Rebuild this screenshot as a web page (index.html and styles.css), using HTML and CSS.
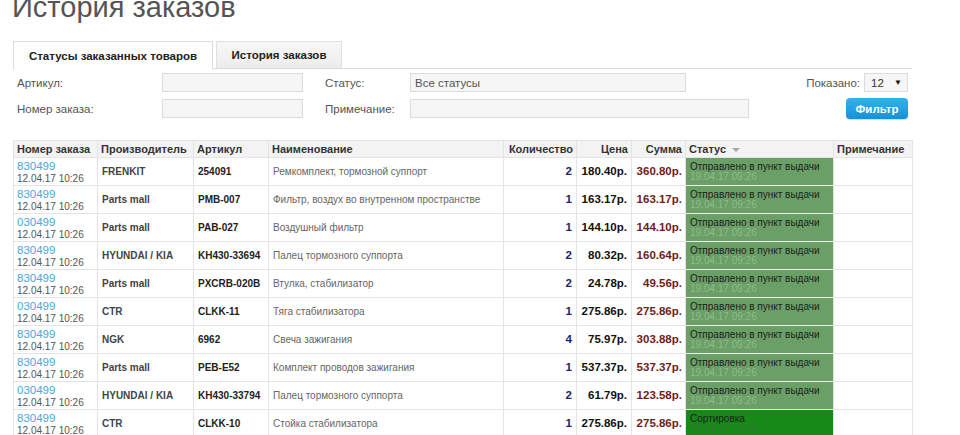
FILE: index.html
```html
<!DOCTYPE html>
<html lang="ru">
<head>
<meta charset="utf-8">
<title>История заказов</title>
<link rel="stylesheet" href="styles.css">
</head>
<body>
<div class="page">
  <h1 class="title">История заказов</h1>

  <div class="tabs">
    <div class="tab active">Статусы заказанных товаров</div>
    <div class="tab">История заказов</div>
  </div>

  <div class="filters">
    <div class="frow">
      <span class="lbl lbl1">Артикул:</span>
      <span class="inp w1"></span>
      <span class="lbl lbl2">Статус:</span>
      <span class="inp w2 sel">Все статусы</span>
      <span class="spacer"></span>
      <span class="lbl lbl3">Показано:</span>
      <span class="inp per"><span>12</span><span class="arr">▼</span></span>
    </div>
    <div class="frow">
      <span class="lbl lbl1">Номер заказа:</span>
      <span class="inp w1"></span>
      <span class="lbl lbl2">Примечание:</span>
      <span class="inp w3"></span>
      <span class="spacer"></span>
      <span class="btn">Фильтр</span>
    </div>
  </div>

  <table class="orders">
    <colgroup>
      <col class="c1"><col class="c2"><col class="c3"><col class="c4"><col class="c5"><col class="c6"><col class="c7"><col class="c8"><col class="c9">
    </colgroup>
    <thead>
      <tr>
        <th>Номер заказа</th>
        <th>Производитель</th>
        <th>Артикул</th>
        <th>Наименование</th>
        <th class="r">Количество</th>
        <th class="r">Цена</th>
        <th class="r">Сумма</th>
        <th>Статус <span class="sort"></span></th>
        <th>Примечание</th>
      </tr>
    </thead>
    <tbody>
      <tr>
        <td class="ord"><div class="cellbox"><a class="num">830499</a><span class="date">12.04.17 10:26</span></div></td>
        <td class="mfr">FRENKIT</td>
        <td class="art">254091</td>
        <td class="name">Ремкомплект, тормозной суппорт</td>
        <td class="qty">2</td>
        <td class="price">180.40р.</td>
        <td class="sum">360.80р.</td>
        <td class="st sent"><div class="cellbox"><span class="st-t">Отправлено в пункт выдачи</span><span class="st-d">19.04.17 09:26</span></div></td>
        <td></td>
      </tr>
      <tr>
        <td class="ord"><div class="cellbox"><a class="num">830499</a><span class="date">12.04.17 10:26</span></div></td>
        <td class="mfr">Parts mall</td>
        <td class="art">PMB-007</td>
        <td class="name">Фильтр, воздух во внутренном пространстве</td>
        <td class="qty">1</td>
        <td class="price">163.17р.</td>
        <td class="sum">163.17р.</td>
        <td class="st sent"><div class="cellbox"><span class="st-t">Отправлено в пункт выдачи</span><span class="st-d">19.04.17 09:26</span></div></td>
        <td></td>
      </tr>
      <tr>
        <td class="ord"><div class="cellbox"><a class="num">030499</a><span class="date">12.04.17 10:26</span></div></td>
        <td class="mfr">Parts mall</td>
        <td class="art">PAB-027</td>
        <td class="name">Воздушный фильтр</td>
        <td class="qty">1</td>
        <td class="price">144.10р.</td>
        <td class="sum">144.10р.</td>
        <td class="st sent"><div class="cellbox"><span class="st-t">Отправлено в пункт выдачи</span><span class="st-d">19.04.17 09:26</span></div></td>
        <td></td>
      </tr>
      <tr>
        <td class="ord"><div class="cellbox"><a class="num">830499</a><span class="date">12.04.17 10:26</span></div></td>
        <td class="mfr">HYUNDAI / KIA</td>
        <td class="art">KH430-33694</td>
        <td class="name">Палец тормозного суппорта</td>
        <td class="qty">2</td>
        <td class="price">80.32р.</td>
        <td class="sum">160.64р.</td>
        <td class="st sent"><div class="cellbox"><span class="st-t">Отправлено в пункт выдачи</span><span class="st-d">19.04.17 09:26</span></div></td>
        <td></td>
      </tr>
      <tr>
        <td class="ord"><div class="cellbox"><a class="num">830499</a><span class="date">12.04.17 10:26</span></div></td>
        <td class="mfr">Parts mall</td>
        <td class="art">PXCRB-020B</td>
        <td class="name">Втулка, стабилизатор</td>
        <td class="qty">2</td>
        <td class="price">24.78р.</td>
        <td class="sum">49.56р.</td>
        <td class="st sent"><div class="cellbox"><span class="st-t">Отправлено в пункт выдачи</span><span class="st-d">19.04.17 09:26</span></div></td>
        <td></td>
      </tr>
      <tr>
        <td class="ord"><div class="cellbox"><a class="num">030499</a><span class="date">12.04.17 10:26</span></div></td>
        <td class="mfr">CTR</td>
        <td class="art">CLKK-11</td>
        <td class="name">Тяга стабилизатора</td>
        <td class="qty">1</td>
        <td class="price">275.86р.</td>
        <td class="sum">275.86р.</td>
        <td class="st sent"><div class="cellbox"><span class="st-t">Отправлено в пункт выдачи</span><span class="st-d">19.04.17 09:26</span></div></td>
        <td></td>
      </tr>
      <tr>
        <td class="ord"><div class="cellbox"><a class="num">830499</a><span class="date">12.04.17 10:26</span></div></td>
        <td class="mfr">NGK</td>
        <td class="art">6962</td>
        <td class="name">Свеча зажигания</td>
        <td class="qty">4</td>
        <td class="price">75.97р.</td>
        <td class="sum">303.88р.</td>
        <td class="st sent"><div class="cellbox"><span class="st-t">Отправлено в пункт выдачи</span><span class="st-d">19.04.17 09:26</span></div></td>
        <td></td>
      </tr>
      <tr>
        <td class="ord"><div class="cellbox"><a class="num">830499</a><span class="date">12.04.17 10:26</span></div></td>
        <td class="mfr">Parts mall</td>
        <td class="art">PEB-E52</td>
        <td class="name">Комплект проводов зажигания</td>
        <td class="qty">1</td>
        <td class="price">537.37р.</td>
        <td class="sum">537.37р.</td>
        <td class="st sent"><div class="cellbox"><span class="st-t">Отправлено в пункт выдачи</span><span class="st-d">19.04.17 09:26</span></div></td>
        <td></td>
      </tr>
      <tr>
        <td class="ord"><div class="cellbox"><a class="num">030499</a><span class="date">12.04.17 10:26</span></div></td>
        <td class="mfr">HYUNDAI / KIA</td>
        <td class="art">KH430-33794</td>
        <td class="name">Палец тормозного суппорта</td>
        <td class="qty">2</td>
        <td class="price">61.79р.</td>
        <td class="sum">123.58р.</td>
        <td class="st sent"><div class="cellbox"><span class="st-t">Отправлено в пункт выдачи</span><span class="st-d">19.04.17 09:26</span></div></td>
        <td></td>
      </tr>
      <tr>
        <td class="ord"><div class="cellbox"><a class="num">830499</a><span class="date">12.04.17 10:26</span></div></td>
        <td class="mfr">CTR</td>
        <td class="art">CLKK-10</td>
        <td class="name">Стойка стабилизатора</td>
        <td class="qty">1</td>
        <td class="price">275.86р.</td>
        <td class="sum">275.86р.</td>
        <td class="st sort-st"><div class="cellbox"><span class="st-t">Сортировка</span><span class="st-d">15.04.17 13:42</span></div></td>
        <td></td>
      </tr>
    </tbody>
  </table>
</div>
</body>
</html>
```
FILE: styles.css
```css
html, body {
  margin: 0;
  padding: 0;
  background: #fff;
  overflow: hidden;
}
body {
  font-family: "Liberation Sans", Arial, sans-serif;
  color: #333;
}
.page {
  padding-left: 13px;
  width: 899px;
}
.title {
  margin: -10px 0 0 -1px;
  font-size: 29px;
  line-height: 34px;
  font-weight: normal;
  color: #555;
}

/* tabs */
.tabs {
  margin-top: 17px;
  display: flex;
  height: 27px;
  border-bottom: 1px solid #dcdcdc;
}
.tab {
  box-sizing: border-box;
  height: 27px;
  display: flex;
  align-items: center;
  justify-content: center;
  font-size: 11.5px;
  font-weight: bold;
  color: #222;
  border: 1px solid #e0e0e0;
  border-bottom: none;
}
.tab.active {
  width: 200px;
  height: 28px;
  margin-bottom: -1px;
  background: #fff;
  border-color: #dcdcdc;
}
.tab:not(.active) {
  width: 126px;
  margin-left: 3px;
  background: linear-gradient(#f8f8f8, #ececec);
}

/* filters */
.filters {
  padding: 4px 4px 0 4px;
  display: flex;
  flex-direction: column;
  gap: 7px;
}
.frow {
  display: flex;
  align-items: center;
  height: 19px;
}
.lbl {
  font-size: 11.5px;
  color: #555;
}
.lbl1 { width: 145px; }
.lbl2 { width: 85px; margin-left: 22px; }
.lbl3 { margin-right: 4px; }
.inp {
  box-sizing: border-box;
  height: 19px;
  background: #f6f6f6;
  border: 1px solid #dcdcdc;
  display: flex;
  align-items: center;
  font-size: 11.5px;
  color: #555;
}
.w1 { width: 141px; }
.w2 { width: 276px; }
.w3 { width: 339px; }
.sel { padding-left: 4px; }
.spacer { flex: 1; }
.per {
  width: 44px;
  padding: 0 5px 0 6px;
  justify-content: space-between;
  color: #333;
}
.arr {
  font-size: 8px;
  color: #111;
}
.btn {
  box-sizing: border-box;
  width: 62px;
  height: 21px;
  margin: -1px 0;
  border-radius: 4px;
  background: linear-gradient(#35b1f0, #1591d9);
  box-shadow: 0 1px 1px rgba(0, 0, 0, 0.15);
  color: #fff;
  font-size: 11.5px;
  font-weight: bold;
  display: flex;
  align-items: center;
  justify-content: center;
}

/* table */
.orders {
  margin-top: 22px;
  width: 899px;
  table-layout: fixed;
  border-collapse: collapse;
}
.c1 { width: 84px; }
.c2 { width: 96px; }
.c3 { width: 75px; }
.c4 { width: 235px; }
.c5 { width: 73px; }
.c6 { width: 55px; }
.c7 { width: 54px; }
.c8 { width: 148px; }
.c9 { width: 79px; }

.orders th {
  height: 16px;
  padding: 0 3px;
  background: #f3f3f3;
  border: 1px solid #e4e4e4;
  font-size: 11px;
  line-height: 13px;
  font-weight: bold;
  color: #333;
  text-align: left;
  white-space: nowrap;
  overflow: hidden;
}
.orders th.r { text-align: right; }
.sort {
  display: inline-block;
  width: 0;
  height: 0;
  margin-left: 3px;
  vertical-align: middle;
  border-left: 4px solid transparent;
  border-right: 4px solid transparent;
  border-top: 4px solid #aaa;
}
.orders tbody tr { height: 28px; }
.orders td {
  padding: 0 4px;
  border: 1px solid #e4e4e4;
  vertical-align: middle;
  white-space: nowrap;
  overflow: hidden;
  font-size: 10px;
  line-height: 12px;
}
.cellbox {
  height: 26px;
  overflow: hidden;
}
.orders td.ord {
  vertical-align: top;
  padding: 0 3px;
}
.num {
  display: block;
  padding-top: 2px;
  font-size: 11.5px;
  line-height: 12px;
  color: #4ca7da;
}
.date {
  display: block;
  margin-top: 1px;
  font-size: 10px;
  line-height: 11px;
  color: #555;
}
.mfr {
  font-weight: bold;
  color: #444;
}
.art {
  font-weight: bold;
  color: #222;
}
.name {
  color: #666;
}
.orders td.qty, .orders td.price, .orders td.sum {
  text-align: right;
  font-size: 11.5px;
  line-height: 13px;
  font-weight: bold;
}
.orders td.qty { padding-right: 4px; color: #23236a; }
.orders td.price { padding-right: 4px; color: #111; }
.orders td.sum { padding-right: 3px; color: #6e1c1c; }
.orders td.st {
  vertical-align: top;
  padding: 0 4px;
  border-top-color: #e8f0e7;
  border-bottom-color: #e8f0e7;
}
.st .cellbox { padding-top: 3px; height: 23px; }
.st-t {
  display: block;
  font-size: 10px;
  line-height: 11px;
  color: #1e1e1e;
}
.st-d {
  display: block;
  font-size: 10px;
  line-height: 10px;
}
.sent { background: #6a9f66; }
.sent .st-d { color: #8fbb8b; }
.sort-st { background: #178917; }
.sort-st .st-d { color: #2f7a2f; }
```
